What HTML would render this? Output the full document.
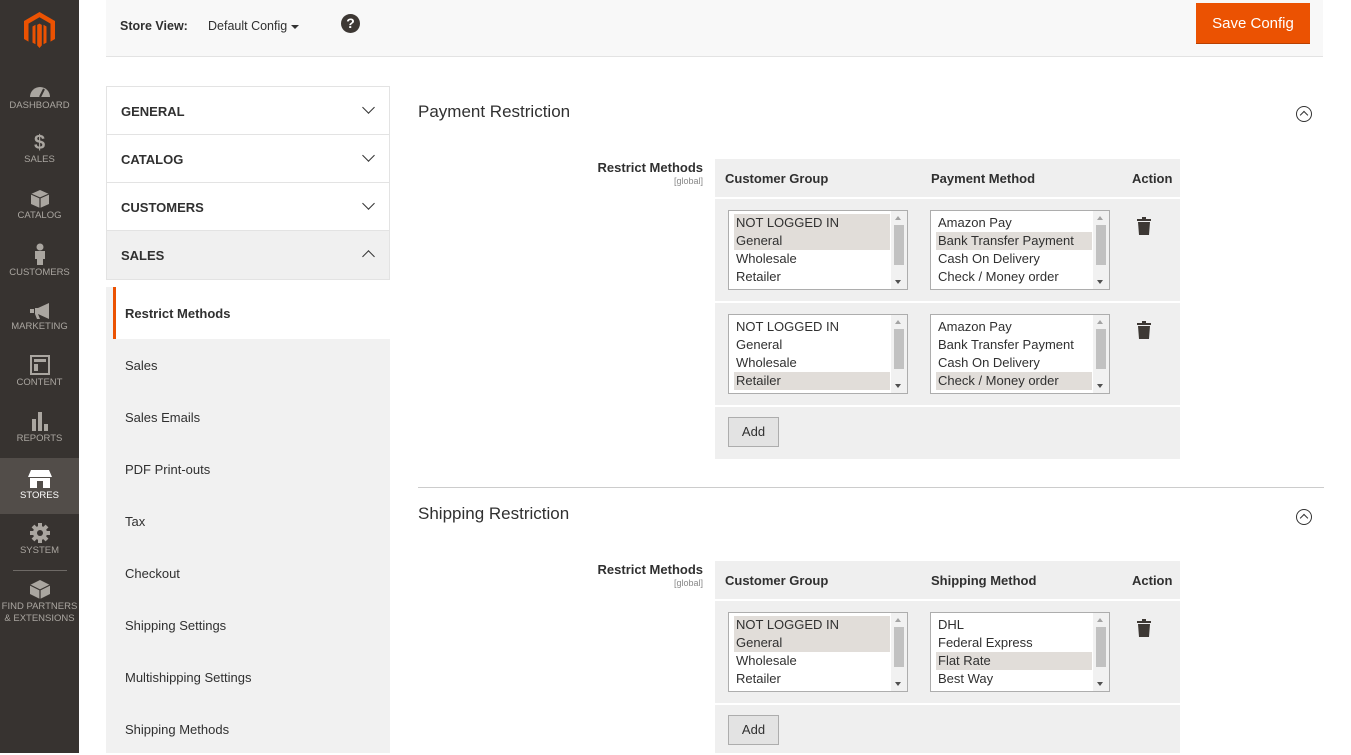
<!DOCTYPE html>
<html><head><style>
*{box-sizing:border-box;margin:0;padding:0}
body{width:1351px;height:753px;overflow:hidden;background:#fff;font-family:"Liberation Sans",sans-serif;color:#303030;position:relative;font-size:13px}
.abs{position:absolute}
.sb{left:0;top:0;width:79px;height:753px;background:#373330}
.ni{position:absolute;left:0;width:79px;text-align:center;color:#aaa6a0;font-size:9.5px;line-height:12px}
.ni svg{display:block;margin:0 auto 2px}
.hdr{left:106px;top:0;width:1217px;height:57px;background:#f8f8f8;border-bottom:1px solid #e3e3e3}
.nav{left:106px;top:86px;width:284px;border:1px solid #e3e3e3}
.nh{height:48px;border-bottom:1px solid #e3e3e3;font-weight:bold;font-size:13px;padding:17px 14px;position:relative;background:#fff}
.nh i{position:absolute;right:16px;top:16px;width:9px;height:9px;border-right:1.5px solid #333;border-bottom:1.5px solid #333;transform:rotate(45deg)}
.sub{left:106px;top:287px;width:284px;height:466px;background:#f1f1f1}
.si{height:52px;padding:19px 19px;font-size:13px}
h2{position:absolute;left:418px;font-size:17px;font-weight:normal;color:#303030}
.col{position:absolute;width:16px;height:16px;border:1px solid #333;border-radius:50%}
.col:after{content:"";position:absolute;left:4px;top:5px;width:5px;height:5px;border-left:1.3px solid #333;border-top:1.3px solid #333;transform:rotate(45deg)}
.lab{position:absolute;left:560px;width:143px;text-align:right;font-weight:bold;font-size:13px}
.lab small{display:block;font-weight:normal;font-size:9px;color:#888;margin-top:1px}
.tbl{position:absolute;left:715px;width:465px;background:#efefef}
.th{position:absolute;font-weight:bold;font-size:13px}
.sel{position:absolute;width:180px;height:80px;background:#fff;border:1px solid #adadad;overflow:hidden;font-size:13px;padding:3px 0 0 5px;line-height:18px}
.sel div{width:156px;padding-left:2px}
.sel .s{background:#e1ddd9}
.sel .sc{position:absolute;right:0;top:0;width:16px;height:100%;background:#f1f1f1}
.sel .sc b{position:absolute;left:3px;top:14px;width:10px;height:40px;background:#c1c1c1}
.sel .sc:before{content:"";position:absolute;left:4px;top:5px;border:3px solid transparent;border-bottom:4px solid #a3a3a3;border-top:0}
.sel .sc:after{content:"";position:absolute;left:4px;bottom:5px;border:3px solid transparent;border-top:4px solid #505050;border-bottom:0}
.rs{position:absolute;left:0;width:465px;height:2px;background:#fff}
.add{position:absolute;left:13px;width:51px;height:30px;border:1px solid #adadad;background:#e3e3e3;text-align:center;line-height:28px;font-size:13px}
.trash{position:absolute;left:422px;width:14px;height:18px}
</style></head><body>
<div class="abs sb"></div>
<svg class="abs" style="left:24px;top:12px" width="31" height="36" viewBox="0 0 31 36"><path d="M15.5 0L31 9v18l-4.5 2.6V11.6L15.5 5.3 4.5 11.6v18L0 27V9z M13.2 12.9l2.3-1.3 2.3 1.3v20.5L15.5 36l-2.3-2.6z M8.5 14.5l3 -1.7v19.5l-3-1.7z M22.5 14.5l-3-1.7v19.5l3-1.7z" fill="#eb5202"/></svg>
<div class="ni" style="top:82px"><svg width="22" height="16"><path d="M1 15A10 10 0 0 1 21 15z" fill="#aaa6a0"/><path d="M11 15l4-8" stroke="#373330" stroke-width="2"/></svg>DASHBOARD</div>
<div class="ni" style="top:134px"><div style="font-size:20px;font-weight:bold;line-height:18px;margin-bottom:2px">$</div>SALES</div>
<div class="ni" style="top:190px"><svg width="20" height="18"><path d="M10 0l9 4v10l-9 4-9-4V4z" fill="#aaa6a0"/><path d="M1 4l9 4 9-4M10 8v10" stroke="#373330" stroke-width="1.2" fill="none"/></svg>CATALOG</div>
<div class="ni" style="top:243px"><svg width="12" height="22"><circle cx="6" cy="4" r="3.5" fill="#aaa6a0"/><path d="M1 8h10v8H9v6H3v-6H1z" fill="#aaa6a0"/></svg>CUSTOMERS</div>
<div class="ni" style="top:303px"><svg width="22" height="16"><path d="M6 5h3l11-5v16L9 11H6z M1 6h4v4H1z M9 11l2 5H8l-2-5z" fill="#aaa6a0"/></svg>MARKETING</div>
<div class="ni" style="top:355px"><svg width="20" height="20"><rect x="1" y="1" width="18" height="18" fill="none" stroke="#aaa6a0" stroke-width="2"/><rect x="4" y="4" width="12" height="3" fill="#aaa6a0"/><rect x="4" y="9" width="4" height="7" fill="#aaa6a0"/></svg>CONTENT</div>
<div class="ni" style="top:411px"><svg width="20" height="20"><rect x="2" y="8" width="4" height="12" fill="#aaa6a0"/><rect x="8" y="1" width="4" height="19" fill="#aaa6a0"/><rect x="14" y="13" width="4" height="7" fill="#aaa6a0"/></svg>REPORTS</div>
<div class="abs" style="left:0;top:458px;width:79px;height:56px;background:#524d49"></div>
<div class="ni" style="top:470px;color:#fff"><svg width="24" height="18"><path d="M3 0h18l3 7H0z" fill="#fff"/><path d="M2 8h20v10H2z" fill="#fff"/><rect x="9" y="11" width="6" height="7" fill="#524d49"/></svg>STORES</div>
<div class="ni" style="top:523px"><svg width="20" height="20"><circle cx="10" cy="10" r="7" fill="#aaa6a0"/><path d="M10 0v20M0 10h20M3 3l14 14M17 3L3 17" stroke="#aaa6a0" stroke-width="4"/><circle cx="10" cy="10" r="3" fill="#373330"/></svg>SYSTEM</div>
<div class="abs" style="left:13px;top:570px;width:54px;height:1px;background:#6e6a66"></div>
<div class="ni" style="top:579px"><svg width="22" height="20"><path d="M11 1l10 5v9l-10 5-10-5V6z" fill="#aaa6a0"/><path d="M1 6l10 5 10-5M11 11v9" stroke="#373330" stroke-width="1.2" fill="none"/></svg>FIND PARTNERS<br>&amp; EXTENSIONS</div>

<div class="abs hdr"></div>
<div class="abs" style="left:120px;top:19px;font-weight:bold;font-size:12.5px">Store View:</div>
<div class="abs" style="left:208px;top:19px;font-size:12.5px">Default Config</div>
<div class="abs" style="left:291px;top:25px;border:4px solid transparent;border-top:4px solid #333;border-bottom:0"></div>
<div class="abs" style="left:341px;top:14px;width:19px;height:19px;border-radius:50%;background:#3d3834;color:#fff;font-weight:bold;font-size:14px;text-align:center;line-height:19px">?</div>
<div class="abs" style="left:1196px;top:3px;width:114px;height:41px;background:#eb5202;color:#fff;font-size:15px;text-align:center;line-height:41px;border-bottom:1px solid #b84002">Save Config</div>

<div class="abs nav">
<div class="nh">GENERAL<i></i></div>
<div class="nh">CATALOG<i></i></div>
<div class="nh">CUSTOMERS<i></i></div>
<div class="nh" style="background:#f0f0f0;border-bottom:none">SALES<i style="transform:rotate(-135deg);top:21px"></i></div>
</div>
<div class="abs sub">
<div class="si" style="background:#fff;border-left:3px solid #eb5202;margin-left:7px;padding-left:9px;font-weight:bold;color:#303030">Restrict Methods</div>
<div class="si">Sales</div><div class="si">Sales Emails</div><div class="si">PDF Print-outs</div><div class="si">Tax</div><div class="si">Checkout</div><div class="si">Shipping Settings</div><div class="si">Multishipping Settings</div><div class="si">Shipping Methods</div>
</div>

<h2 style="top:102px">Payment Restriction</h2>
<div class="col" style="left:1296px;top:106px"></div>
<div class="lab" style="top:160px">Restrict Methods<small>[global]</small></div>
<div class="tbl" style="top:159px;height:300px">
<div class="th" style="left:10px;top:12px">Customer Group</div>
<div class="th" style="left:216px;top:12px">Payment Method</div>
<div class="th" style="left:417px;top:12px">Action</div>
<div class="rs" style="top:38px"></div><div class="rs" style="top:142px"></div><div class="rs" style="top:246px"></div>
<div class="sel" style="left:13px;top:51px"><div class="s">NOT LOGGED IN</div><div class="s">General</div><div>Wholesale</div><div>Retailer</div><span class="sc"><b></b></span></div>
<div class="sel" style="left:215px;top:51px"><div>Amazon Pay</div><div class="s">Bank Transfer Payment</div><div>Cash On Delivery</div><div>Check / Money order</div><span class="sc"><b></b></span></div>
<svg class="trash" style="top:58px" viewBox="0 0 14 18"><path d="M5 0h4v2h5v2H0V2h5zM1 5h12l-1 13H2z" fill="#3d3834"/></svg>
<div class="sel" style="left:13px;top:155px"><div>NOT LOGGED IN</div><div>General</div><div>Wholesale</div><div class="s">Retailer</div><span class="sc"><b></b></span></div>
<div class="sel" style="left:215px;top:155px"><div>Amazon Pay</div><div>Bank Transfer Payment</div><div>Cash On Delivery</div><div class="s">Check / Money order</div><span class="sc"><b></b></span></div>
<svg class="trash" style="top:162px" viewBox="0 0 14 18"><path d="M5 0h4v2h5v2H0V2h5zM1 5h12l-1 13H2z" fill="#3d3834"/></svg>
<div class="add" style="top:258px">Add</div>
</div>

<div class="abs" style="left:418px;top:487px;width:906px;height:1px;background:#ccc"></div>
<h2 style="top:504px">Shipping Restriction</h2>
<div class="col" style="left:1296px;top:509px"></div>
<div class="lab" style="top:562px">Restrict Methods<small>[global]</small></div>
<div class="tbl" style="top:561px;height:192px">
<div class="th" style="left:10px;top:12px">Customer Group</div>
<div class="th" style="left:216px;top:12px">Shipping Method</div>
<div class="th" style="left:417px;top:12px">Action</div>
<div class="rs" style="top:38px"></div><div class="rs" style="top:142px"></div>
<div class="sel" style="left:13px;top:51px"><div class="s">NOT LOGGED IN</div><div class="s">General</div><div>Wholesale</div><div>Retailer</div><span class="sc"><b></b></span></div>
<div class="sel" style="left:215px;top:51px"><div>DHL</div><div>Federal Express</div><div class="s">Flat Rate</div><div>Best Way</div><span class="sc"><b></b></span></div>
<svg class="trash" style="top:58px" viewBox="0 0 14 18"><path d="M5 0h4v2h5v2H0V2h5zM1 5h12l-1 13H2z" fill="#3d3834"/></svg>
<div class="add" style="top:154px">Add</div>
</div>
</body></html>
